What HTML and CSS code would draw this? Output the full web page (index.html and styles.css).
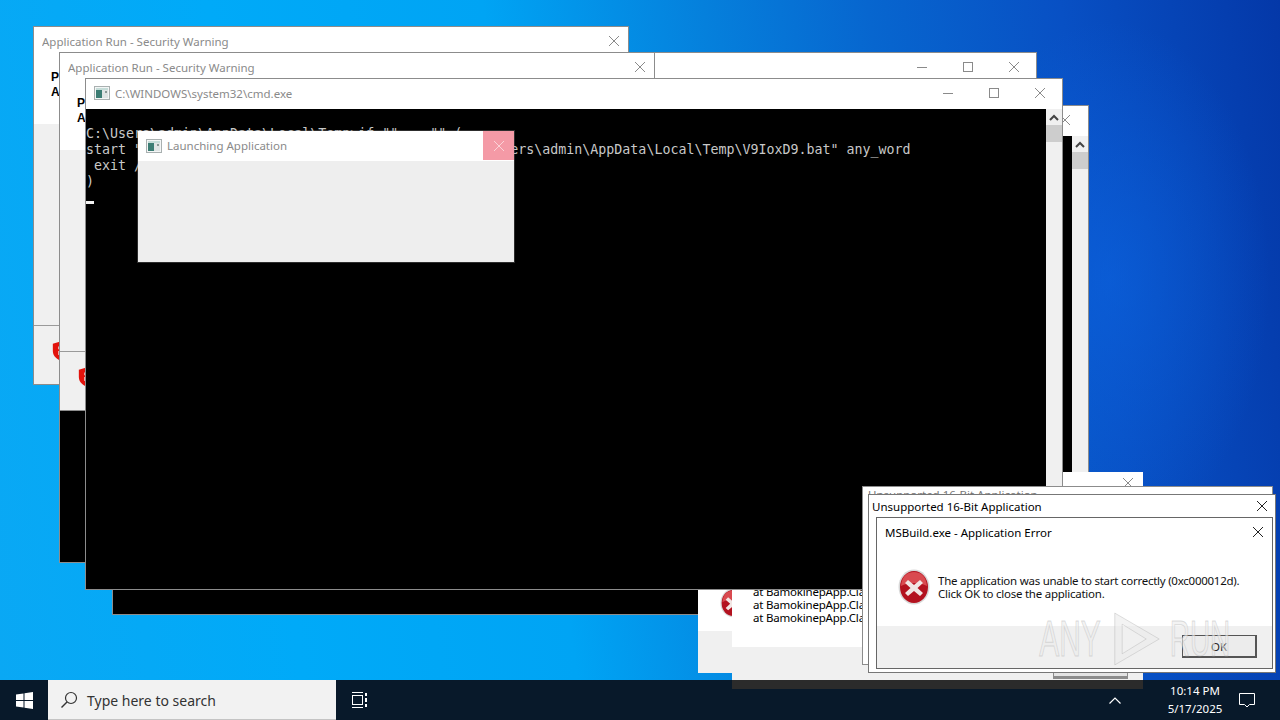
FILE: index.html
```html
<!DOCTYPE html>
<html>
   <head>
      <meta charset="UTF-8">
      <title>Desktop</title>
      <link rel="stylesheet" href="styles.css">
   </head>
   <body>
      <svg class="defs" width="0" height="0">
         <symbol id="i-close" viewBox="0 0 12 12"><path d="M1 1L11 11M11 1L1 11" fill="none" stroke="currentColor" stroke-width="1"/></symbol>
         <symbol id="i-max" viewBox="0 0 12 12"><rect x="1.5" y="1.5" width="9" height="9" fill="none" stroke="currentColor"/></symbol>
         <symbol id="i-min" viewBox="0 0 12 12"><path d="M1 6.5H11" fill="none" stroke="currentColor"/></symbol>
         <symbol id="i-up" viewBox="0 0 12 12"><path d="M2 8L6 4L10 8" fill="none" stroke="currentColor" stroke-width="2"/></symbol>
         <symbol id="i-cmd" viewBox="0 0 16 16">
            <rect x="0.5" y="1.5" width="15" height="13" fill="#f4f6f6" stroke="#a9b0b0"/>
            <rect x="2" y="3" width="12" height="2" fill="#c5dcd8"/>
            <rect x="2" y="5" width="6" height="8" fill="#3c7d74"/>
            <rect x="8" y="5" width="6" height="8" fill="#dfe4e4"/>
            <rect x="11" y="6" width="2" height="2" fill="#8a9896"/>
         </symbol>
         <symbol id="i-shield" viewBox="0 0 24 24">
            <path d="M12 1L22 4V12C22 18 17 21.500 12 23C7 21.500 2 18 2 12V4Z" fill="#e2130c"/>
            <path d="M8 7H14V10H8ZM8 12H14V16L11 18L8 16Z" fill="#f8f2f0"/>
         </symbol>
         <symbol id="i-error" viewBox="0 0 32 36">
            <ellipse cx="16" cy="18" rx="15.500" ry="17.500" fill="#d8d8d8"/>
            <ellipse cx="16" cy="18" rx="14" ry="16" fill="#b3121f"/>
            <path d="M3 17C4 6 10 3 16 3C22 3 28 6 29 17C22 13 10 13 3 17Z" fill="#d94a50"/>
            <path d="M10 11L16 16L22 11L25 14L19.500 19L25 24L22 27L16 22L10 27L7 24L12.500 19L7 14Z" fill="#f1e6e4"/>
         </symbol>
      </svg>

      <div class="desktop">

         <!-- windows, back to front -->
         <div class="win win-warn-a">
            <div class="titlebar titlebar-dim">
               <span class="title">Application Run - Security Warning</span>
               <svg class="ctl ctl-close"><use href="#i-close"/></svg>
            </div>
            <div class="warn-body">
               <div class="warn-line">Publisher:</div>
               <div class="warn-line">Application:</div>
            </div>
            <div class="warn-gray"></div>
            <div class="warn-foot"><svg class="shield"><use href="#i-shield"/></svg></div>
         </div>

         <div class="win win-cmd-back">
            <div class="titlebar titlebar-dim">
               <span class="title"></span>
               <div class="ctl-group">
                  <svg class="ctl"><use href="#i-min"/></svg>
                  <svg class="ctl"><use href="#i-max"/></svg>
                  <svg class="ctl"><use href="#i-close"/></svg>
               </div>
            </div>
            <div class="console-blank"></div>
         </div>

         <div class="win win-warn-b">
            <div class="titlebar titlebar-dim">
               <span class="title">Application Run - Security Warning</span>
               <svg class="ctl ctl-close"><use href="#i-close"/></svg>
            </div>
            <div class="warn-body">
               <div class="warn-line">Publisher:</div>
               <div class="warn-line">Application:</div>
            </div>
            <div class="warn-gray"></div>
            <div class="warn-foot"><svg class="shield"><use href="#i-shield"/></svg></div>
         </div>

         <div class="win win-cmd-mid">
            <div class="titlebar titlebar-dim">
               <span class="title"></span>
               <svg class="ctl ctl-close"><use href="#i-close"/></svg>
            </div>
            <div class="console-wrap">
               <div class="console-blank"></div>
               <div class="scrollbar">
                  <svg class="scroll-up"><use href="#i-up"/></svg>
                  <div class="scroll-thumb"></div>
               </div>
            </div>
         </div>

         <div class="win win-crash-a">
            <div class="crash-body">
               <svg class="crash-icon"><use href="#i-error"/></svg>
            </div>
            <div class="crash-foot"></div>
         </div>

         <div class="win win-crash-b">
            <div class="titlebar titlebar-dim">
               <span class="title"></span>
               <svg class="ctl ctl-close"><use href="#i-close"/></svg>
            </div>
            <div class="crash-body crash-trace">
               <div>at BamokinepApp.Class1.Main()</div>
               <div>at BamokinepApp.Class1.Main()</div>
               <div>at BamokinepApp.Class1.Main()</div>
            </div>
            <div class="crash-foot">
               <div class="sliver-btn"></div>
            </div>
         </div>

         <div class="win win-cmd">
            <div class="titlebar titlebar-dim">
               <svg class="app-icon"><use href="#i-cmd"/></svg>
               <span class="title">C:\WINDOWS\system32\cmd.exe</span>
               <div class="ctl-group">
                  <svg class="ctl"><use href="#i-min"/></svg>
                  <svg class="ctl"><use href="#i-max"/></svg>
                  <svg class="ctl"><use href="#i-close"/></svg>
               </div>
            </div>
            <div class="console-wrap">
<pre class="console">
C:\Users\admin\AppData\Local\Temp&gt;if "" == "" (
start "                                        "C:\Users\admin\AppData\Local\Temp\V9IoxD9.bat" any_word
 exit /b
)
<span class="cursor"></span></pre>
               <div class="scrollbar">
                  <svg class="scroll-up"><use href="#i-up"/></svg>
                  <div class="scroll-thumb"></div>
               </div>
            </div>
         </div>

         <div class="win win-launch">
            <div class="titlebar titlebar-dim">
               <svg class="app-icon"><use href="#i-cmd"/></svg>
               <span class="title">Launching Application</span>
               <div class="launch-close"><svg class="ctl"><use href="#i-close"/></svg></div>
            </div>
            <div class="launch-body"></div>
         </div>

         <div class="win win-16bit-back">
            <div class="titlebar"><span class="title">Unsupported 16-Bit Application</span></div>
         </div>

         <div class="win win-16bit">
            <div class="titlebar titlebar-thin">
               <span class="title">Unsupported 16-Bit Application</span>
               <svg class="ctl ctl-dark"><use href="#i-close"/></svg>
            </div>
            <div class="win win-error">
               <div class="titlebar titlebar-error">
                  <span class="title">MSBuild.exe - Application Error</span>
                  <svg class="ctl ctl-dark"><use href="#i-close"/></svg>
               </div>
               <div class="error-body">
                  <svg class="error-icon"><use href="#i-error"/></svg>
                  <div class="error-text">
                     <div>The application was unable to start correctly (0xc000012d).</div>
                     <div>Click OK to close the application.</div>
                  </div>
               </div>
               <div class="error-foot">
                  <button class="ok-btn">OK</button>
               </div>
            </div>
         </div>

         <!-- sandbox watermark -->
         <div class="watermark">
            <span class="wm-any">ANY</span>
            <svg class="wm-play" viewBox="0 0 54 60"><path d="M3 2L51 30L3 58ZM11 14V46L37 30Z" fill="rgba(235,235,235,0.6)" stroke="rgba(170,170,170,0.4)"/></svg>
            <span class="wm-run">RUN</span>
         </div>
      </div>

      <div class="taskbar">
         <div class="strip"></div>
         <div class="start">
            <svg class="start-logo" viewBox="0 0 17 17"><path d="M0 2.500L7.500 1.400V8H0ZM8.500 1.300L17 0V8H8.500ZM0 9H7.500V15.600L0 14.500ZM8.500 9H17V17L8.500 15.700Z" fill="#fff"/></svg>
         </div>
         <div class="search">
            <svg class="search-icon" viewBox="0 0 18 18"><circle cx="11" cy="7" r="5.500" fill="none" stroke="#333" stroke-width="1.200"/><path d="M7 11L1.500 16.500" fill="none" stroke="#333" stroke-width="1.500"/></svg>
            <span>Type here to search</span>
         </div>
         <div class="taskview">
            <svg viewBox="0 0 18 16" width="18" height="16"><path d="M1 .5H12M1 15.500H12" fill="none" stroke="#fff"/><rect x="1.500" y="3.500" width="10" height="9" fill="none" stroke="#fff"/><path d="M15 1V4M15 6V10M15 12V15" fill="none" stroke="#fff" stroke-width="2"/></svg>
         </div>
         <div class="tray">
            <svg class="tray-up" viewBox="0 0 12 7"><path d="M.5 6.500L6 1L11.500 6.500" fill="none" stroke="#fff" stroke-width="1.200"/></svg>
            <div class="clock">
               <div>10:14 PM</div>
               <div>5/17/2025</div>
            </div>
            <svg class="notify" viewBox="0 0 16 16"><path d="M.5 1.500H15.500V12.500H10.500L8 15L5.500 12.500H.5Z" fill="none" stroke="#fff"/></svg>
         </div>
      </div>
   </body>
</html>
```
FILE: styles.css
```css
*
{
   box-sizing: border-box;
}

html, body
{
   margin: 0;
   height: 100%;
}

body
{
   width: 1280px;
   height: 720px;
   overflow: hidden;
   display: flex;
   flex-direction: column;
   font-family: "Noto Sans", "Open Sans", sans-serif;
   font-size: 11.5px;
}

.defs
{
   position: absolute;
}

.desktop
{
   position: relative;
   height: 680px;
   background:
      radial-gradient(ellipse 160px 260px at 1110px 280px, rgba(12,100,225,0.6), rgba(12,100,225,0) 100%),
      linear-gradient(82deg, #0aa8f4 0%, #00aaf8 22%, #00a4f4 42%, #0580dc 58%, #0766cf 70%, #0850c4 84%, #0438a8 100%);
}

/* windows */

.win
{
   position: absolute;
   display: flex;
   flex-direction: column;
   background: #fff;
   border: 1px solid #8c8c8c;
}

.titlebar
{
   display: flex;
   align-items: center;
   flex: none;
   height: 30px;
   background: #fff;
   padding: 0 0 2px 8px;
}

.title
{
   flex: 1;
   white-space: nowrap;
   overflow: hidden;
   color: #000;
}

.titlebar-dim .title
{
   color: #8a8a8a;
}

.app-icon
{
   width: 16px;
   height: 16px;
   margin-right: 5px;
   flex: none;
}

.ctl
{
   width: 12px;
   height: 12px;
   flex: none;
   color: #8a8a8a;
}

.ctl-close
{
   margin-right: 8px;
}

.ctl-dark
{
   color: #222;
}

.ctl-group
{
   display: flex;
   gap: 34px;
   padding-right: 16px;
}

.win-warn-a
{
   left: 33px;
   top: 26px;
   width: 596px;
   height: 359px;
}

.win-warn-b
{
   left: 59px;
   top: 52px;
   width: 596px;
   height: 359px;
}

.warn-body
{
   height: 67px;
   padding: 13px 0 0 17px;
   font-family: "Liberation Sans", sans-serif;
   font-size: 12px;
   font-weight: bold;
   line-height: 15px;
}

.warn-gray
{
   height: 202px;
   background: #f0f0f0;
   border-bottom: 1px solid #9a9a9a;
}

.warn-foot
{
   flex: 1;
   background: #f0f0f0;
   padding: 13px 0 0 17px;
}

.shield
{
   display: block;
   width: 22px;
   height: 24px;
}

.win-cmd-back
{
   left: 59px;
   top: 52px;
   width: 978px;
   height: 511px;
}

.console-blank
{
   flex: 1;
   background: #000;
}

.win-cmd-mid
{
   left: 112px;
   top: 105px;
   width: 977px;
   height: 510px;
}

.win-cmd-mid .ctl-close
{
   margin-right: 17px;
}

.console-wrap
{
   flex: 1;
   display: flex;
   min-height: 0;
}

.scrollbar
{
   width: 16px;
   flex: none;
   display: flex;
   flex-direction: column;
   align-items: center;
   background: #f0f0f0;
}

.scroll-up
{
   width: 12px;
   height: 12px;
   margin: 3px 0 1px;
   flex: none;
   color: #444;
}

.scroll-thumb
{
   width: 100%;
   height: 17px;
   background: #cdcdcd;
}

.win-cmd
{
   left: 85px;
   top: 78px;
   width: 978px;
   height: 512px;
}

.console
{
   flex: 1;
   margin: 0;
   padding: 17px 0 0;
   background: #000;
   color: #c8c8c8;
   font-family: "DejaVu Sans Mono", "Liberation Mono", monospace;
   font-size: 13.3px;
   line-height: 16px;
}

.cursor
{
   display: inline-block;
   width: 8px;
   height: 3px;
   background: #f2f2f2;
   vertical-align: -2px;
}

.win-launch
{
   left: 138px;
   top: 131px;
   width: 376px;
   height: 131px;
   border: 0;
   box-shadow: 0 0 0 1px rgba(150,150,150,0.3);
}

.win-launch .titlebar
{
   padding-bottom: 0;
}

.win-launch .title
{
   padding-bottom: 2px;
}

.launch-close
{
   width: 31px;
   height: 29px;
   align-self: flex-start;
   display: flex;
   align-items: center;
   justify-content: center;
   background: #f49aa6;
}

.launch-close .ctl
{
   color: #fbd3d8;
}

.launch-body
{
   flex: 1;
   background: #eee;
}

/* crash dialogs near the bottom right */

.win-crash-a
{
   left: 698px;
   top: 500px;
   width: 300px;
   height: 173px;
   border: 0;
}

.crash-body
{
   flex: 1;
   position: relative;
}

.crash-icon
{
   position: absolute;
   left: 22px;
   top: 88px;
   width: 26px;
   height: 30px;
}

.crash-foot
{
   flex: none;
   height: 42px;
   background: #f0f0f0;
}

.win-crash-b
{
   left: 732px;
   top: 472px;
   width: 411px;
   height: 208px;
   border: 0;
}

.win-crash-b .crash-foot
{
   height: 33px;
   position: relative;
}

.win-crash-b .ctl-close
{
   margin-right: 9px;
}

.win-crash-b .titlebar
{
   height: 24px;
}

.crash-trace
{
   padding: 89px 0 0 21px;
   line-height: 13px;
   letter-spacing: -0.2px;
   color: #000;
}

.sliver-btn
{
   position: absolute;
   left: 321px;
   bottom: 1px;
   width: 75px;
   height: 7px;
   background: #e4e4e4;
   border-bottom: 3px solid #8c8c8c;
   border-left: 1px solid #8c8c8c;
   border-right: 1px solid #8c8c8c;
}

.win-16bit-back
{
   left: 862px;
   top: 486px;
   width: 411px;
   height: 179px;
}

.win-16bit-back .titlebar
{
   height: 14px;
   padding-left: 5px;
   align-items: flex-start;
}

.win-16bit-back .title
{
   color: #777;
}

.win-16bit
{
   left: 868px;
   top: 494px;
   width: 408px;
   height: 179px;
   background: #fff;
   border-color: #777;
}

.titlebar-thin
{
   height: 22px;
   padding: 0 7px 0 3px;
}

.win-error
{
   left: 7px;
   top: 22px;
   width: 397px;
   height: 152px;
   border-color: #666;
}

.titlebar-error
{
   height: 30px;
   padding: 0 8px 2px 8px;
}

.error-body
{
   flex: 1;
   display: flex;
   align-items: center;
   gap: 8px;
   padding: 0 0 0 21px;
}

.error-icon
{
   width: 32px;
   height: 36px;
   flex: none;
}

.error-text
{
   line-height: 13px;
   letter-spacing: -0.25px;
   color: #111;
}

.error-foot
{
   flex: none;
   height: 42px;
   display: flex;
   justify-content: flex-end;
   padding: 9px 15px 0 0;
   background: #f0f0f0;
}

.ok-btn
{
   width: 75px;
   height: 23px;
   padding: 0;
   border: 1px solid #555;
   border-bottom-width: 2px;
   border-right-width: 2px;
   background: #ececec;
   color: #222;
   font: inherit;
}

/* watermark */

.watermark
{
   position: absolute;
   left: 1040px;
   top: 610px;
   display: flex;
   align-items: center;
   gap: 8px;
   font-family: "Liberation Sans", sans-serif;
   font-size: 50px;
   color: rgba(235,235,235,0.6);
   -webkit-text-stroke: 1px rgba(170,170,170,0.4);
}

.watermark span
{
   display: flex;
   justify-content: center;
   width: 60px;
   white-space: nowrap;
}

.wm-any
{
   transform: scaleX(0.6);
}

.wm-run
{
   transform: scaleX(0.56);
}

.wm-play
{
   width: 50px;
   height: 58px;
   margin-left: 4px;
   flex: none;
}

/* taskbar */

.taskbar
{
   position: relative;
   flex: none;
   height: 40px;
   display: flex;
   align-items: center;
   background: #08192a;
   color: #fff;
}

.strip
{
   position: absolute;
   left: 732px;
   top: 0;
   width: 411px;
   height: 9px;
   background: #2b2b2b;
}

.start
{
   width: 48px;
   height: 40px;
   display: flex;
   align-items: center;
   justify-content: center;
}

.start-logo
{
   width: 17px;
   height: 17px;
}

.search
{
   width: 288px;
   height: 40px;
   display: flex;
   align-items: center;
   gap: 9px;
   padding: 1px 0 0 12px;
   background: #f2f2f2;
   border-bottom: 1px solid #c4c4c4;
   color: #333;
   font-size: 14px;
}

.search-icon
{
   width: 18px;
   height: 18px;
   flex: none;
}

.taskview
{
   width: 48px;
   display: flex;
   justify-content: center;
}

.tray
{
   margin-left: auto;
   display: flex;
   align-items: center;
   position: relative;
   z-index: 1;
}

.tray-up
{
   width: 12px;
   height: 7px;
   margin-right: 38px;
}

.clock
{
   width: 72px;
   text-align: center;
   line-height: 18px;
   font-size: 11.5px;
}

.notify
{
   width: 16px;
   height: 16px;
   margin: 0 25px 0 8px;
}
```
